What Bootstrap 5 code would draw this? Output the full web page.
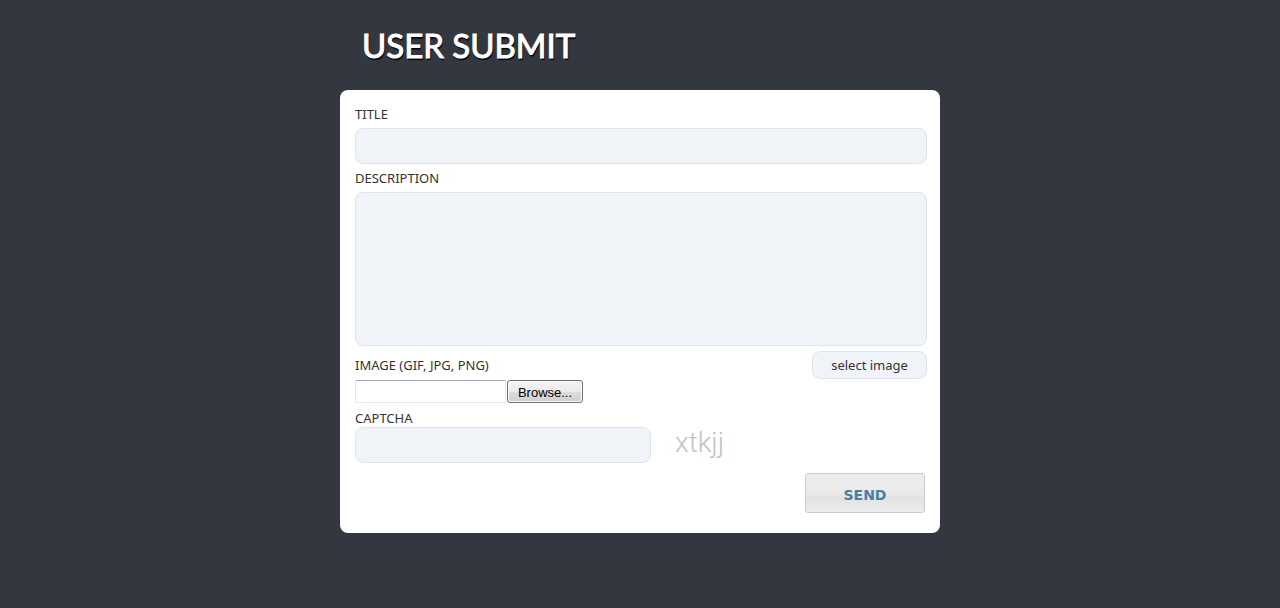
<!DOCTYPE html>
<html lang="en">
<head>
<meta charset="utf-8">
<meta name="viewport" content="width=device-width, initial-scale=1">
<title>User Submit</title>
<link href="https://cdn.jsdelivr.net/npm/bootstrap@5.3.0/dist/css/bootstrap.min.css" rel="stylesheet">
<style>
  body { background: #33373f; color: #333; font: 13px/20px "Noto Sans", Tahoma, sans-serif; }
  .page { max-width: 600px; }
  .page-title { font: 400 33px/40px Lato, sans-serif; color: #fff; text-shadow: 1px 2px 1px #000; -webkit-text-stroke: 1px #fff; padding: 25px 22px; }
  .panel { background: #fff; border-radius: 8px; padding: 14px 13px 20px 15px; }
  .field { background: #f0f3f8; border-color: #dfe4ea; border-radius: 8px; font-size: 13px; }
  .field-line { height: 36px; }
  .field-area { height: 154px; resize: none; }
  .image-row { padding: 5px 0 1px; }
  .pick { width: 115px; height: 28px; background: #f0f3f8; border: 1px solid #dfe4ea; border-radius: 8px; color: #333; font-size: 13px; line-height: 18px; padding: 0; }
  .file-row { gap: 1px; }
  .file-name { width: 151px; height: 23px; border: 1px solid #e3e9ef; border-top-color: #abadb3; }
  .browse { width: 76px; height: 23px; border: 1px solid #707070; border-radius: 3px; background: linear-gradient(#f2f2f2 0 10%, #ebebeb 50%, #dddddd 50%, #cfcfcf); box-shadow: inset 0 0 0 1px #fafafa; color: #000; font: 13px/18px "Liberation Sans", Arial, sans-serif; padding: 2px 0 0; }
  .captcha-label { padding-top: 6px; line-height: 18px; }
  .captcha-field { width: 296px; }
  .captcha-text { font: 300 28px/32px Roboto, sans-serif; color: #c0c3c5; margin-left: 24px; }
  .send-row { padding: 10px 2px 0; }
  .send { width: 120px; height: 40px; border: 1px solid #ccc; border-radius: 3px; background: linear-gradient(#ededed, #ebebeb 50%, #e2e2e2 62%, #ececec); color: #4580a5; font: 700 14px/20px "DejaVu Sans", Verdana, sans-serif; padding: 3px 0 0; }
</style>
</head>
<body>
<main class="page mx-auto">
  <h1 class="page-title mb-0">USER SUBMIT</h1>
  <form class="panel">
    <label for="title" class="d-block mb-1">TITLE</label>
    <input id="title" type="text" class="form-control field field-line">
    <label for="description" class="d-block my-1">DESCRIPTION</label>
    <textarea id="description" class="form-control field field-area"></textarea>
    <div class="image-row d-flex justify-content-between align-items-center">
      <label for="file-name">IMAGE (GIF, JPG, PNG)</label>
      <button type="button" class="pick" onclick="document.getElementById('image').click()">select image</button>
    </div>
    <div class="file-row d-flex">
      <input id="file-name" type="text" class="file-name" readonly>
      <button type="button" class="browse" onclick="document.getElementById('image').click()">Browse...</button>
      <input id="image" type="file" accept=".gif,.jpg,.png" class="d-none" aria-label="Image file" onchange="document.getElementById('file-name').value = this.files[0] ? this.files[0].name : ''">
    </div>
    <label for="captcha" class="captcha-label d-block">CAPTCHA</label>
    <div class="d-flex">
      <input id="captcha" type="text" class="form-control field field-line captcha-field" autocomplete="off">
      <span class="captcha-text">xtkjj</span>
    </div>
    <div class="send-row d-flex justify-content-end">
      <button type="submit" class="send">SEND</button>
    </div>
  </form>
</main>
<script src="https://cdn.jsdelivr.net/npm/bootstrap@5.3.0/dist/js/bootstrap.bundle.min.js"></script>
</body>
</html>
